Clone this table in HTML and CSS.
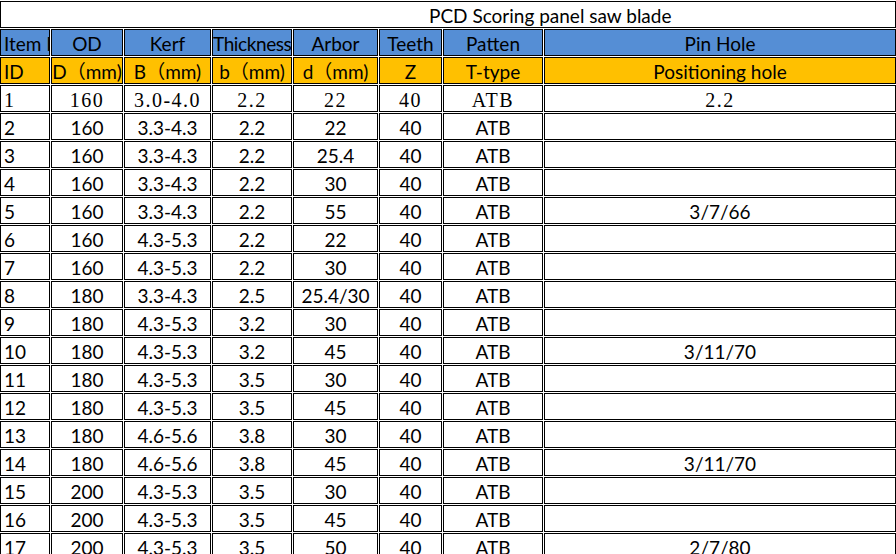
FILE: index.html
```html
<!DOCTYPE html>
<html>
<head>
<meta charset="utf-8">
<title>PCD Scoring panel saw blade</title>
<link rel="stylesheet" href="styles.css">
</head>
<body>
<div class="sheet">
  <div class="cell title">PCD Scoring panel saw blade</div>

  <div class="cell hd1 left">Item No.</div>
  <div class="cell hd1">OD</div>
  <div class="cell hd1">Kerf</div>
  <div class="cell hd1 left tight">Thickness</div>
  <div class="cell hd1">Arbor</div>
  <div class="cell hd1">Teeth</div>
  <div class="cell hd1">Patten</div>
  <div class="cell hd1">Pin Hole</div>

  <div class="cell hd2 left">ID</div>
  <div class="cell hd2">D（mm)</div>
  <div class="cell hd2">B（mm)</div>
  <div class="cell hd2">b（mm)</div>
  <div class="cell hd2">d（mm)</div>
  <div class="cell hd2">Z</div>
  <div class="cell hd2">T-type</div>
  <div class="cell hd2">Positioning hole</div>

  <div class="cell serif left">1</div>
  <div class="cell serif">160</div>
  <div class="cell serif">3.0-4.0</div>
  <div class="cell serif">2.2</div>
  <div class="cell serif">22</div>
  <div class="cell serif">40</div>
  <div class="cell serif">ATB</div>
  <div class="cell serif">2.2</div>

  <div class="cell left">2</div><div class="cell">160</div><div class="cell">3.3-4.3</div><div class="cell">2.2</div><div class="cell">22</div><div class="cell">40</div><div class="cell">ATB</div><div class="cell"></div>
  <div class="cell left">3</div><div class="cell">160</div><div class="cell">3.3-4.3</div><div class="cell">2.2</div><div class="cell">25.4</div><div class="cell">40</div><div class="cell">ATB</div><div class="cell"></div>
  <div class="cell left">4</div><div class="cell">160</div><div class="cell">3.3-4.3</div><div class="cell">2.2</div><div class="cell">30</div><div class="cell">40</div><div class="cell">ATB</div><div class="cell"></div>
  <div class="cell left">5</div><div class="cell">160</div><div class="cell">3.3-4.3</div><div class="cell">2.2</div><div class="cell">55</div><div class="cell">40</div><div class="cell">ATB</div><div class="cell">3/7/66</div>
  <div class="cell left">6</div><div class="cell">160</div><div class="cell">4.3-5.3</div><div class="cell">2.2</div><div class="cell">22</div><div class="cell">40</div><div class="cell">ATB</div><div class="cell"></div>
  <div class="cell left">7</div><div class="cell">160</div><div class="cell">4.3-5.3</div><div class="cell">2.2</div><div class="cell">30</div><div class="cell">40</div><div class="cell">ATB</div><div class="cell"></div>
  <div class="cell left">8</div><div class="cell">180</div><div class="cell">3.3-4.3</div><div class="cell">2.5</div><div class="cell">25.4/30</div><div class="cell">40</div><div class="cell">ATB</div><div class="cell"></div>
  <div class="cell left">9</div><div class="cell">180</div><div class="cell">4.3-5.3</div><div class="cell">3.2</div><div class="cell">30</div><div class="cell">40</div><div class="cell">ATB</div><div class="cell"></div>
  <div class="cell left">10</div><div class="cell">180</div><div class="cell">4.3-5.3</div><div class="cell">3.2</div><div class="cell">45</div><div class="cell">40</div><div class="cell">ATB</div><div class="cell">3/11/70</div>
  <div class="cell left">11</div><div class="cell">180</div><div class="cell">4.3-5.3</div><div class="cell">3.5</div><div class="cell">30</div><div class="cell">40</div><div class="cell">ATB</div><div class="cell"></div>
  <div class="cell left">12</div><div class="cell">180</div><div class="cell">4.3-5.3</div><div class="cell">3.5</div><div class="cell">45</div><div class="cell">40</div><div class="cell">ATB</div><div class="cell"></div>
  <div class="cell left">13</div><div class="cell">180</div><div class="cell">4.6-5.6</div><div class="cell">3.8</div><div class="cell">30</div><div class="cell">40</div><div class="cell">ATB</div><div class="cell"></div>
  <div class="cell left">14</div><div class="cell">180</div><div class="cell">4.6-5.6</div><div class="cell">3.8</div><div class="cell">45</div><div class="cell">40</div><div class="cell">ATB</div><div class="cell">3/11/70</div>
  <div class="cell left">15</div><div class="cell">200</div><div class="cell">4.3-5.3</div><div class="cell">3.5</div><div class="cell">30</div><div class="cell">40</div><div class="cell">ATB</div><div class="cell"></div>
  <div class="cell left">16</div><div class="cell">200</div><div class="cell">4.3-5.3</div><div class="cell">3.5</div><div class="cell">45</div><div class="cell">40</div><div class="cell">ATB</div><div class="cell"></div>
  <div class="cell left">17</div><div class="cell">200</div><div class="cell">4.3-5.3</div><div class="cell">3.5</div><div class="cell">50</div><div class="cell">40</div><div class="cell">ATB</div><div class="cell">2/7/80</div>
</div>
</body>
</html>
```

FILE: styles.css
```css
html, body {
  margin: 0;
  padding: 0;
  background: #ffffff;
}

body {
  font-family: Lato, "Noto Sans CJK SC", sans-serif;
  font-size: 19px;
  color: #000000;
  overflow: hidden;
}

.sheet {
  display: grid;
  grid-template-columns: 50px 72px 87px 80px 85px 63px 100px 352px;
  grid-auto-rows: 27px;
  gap: 1px;
  padding-top: 1px;
  width: 896px;
}

.cell {
  box-sizing: border-box;
  border: 1px solid #000000;
  display: flex;
  align-items: center;
  justify-content: center;
  white-space: nowrap;
  overflow: hidden;
  line-height: 1;
  padding-top: 1px;
}

.title {
  grid-column: 1 / -1;
  justify-content: flex-start;
  padding-left: 428px;
}

.left {
  justify-content: flex-start;
  padding-left: 3px;
}

.tight {
  padding-left: 0;
  letter-spacing: -0.4px;
}

.hd1 {
  background: #558ed5;
}

.hd2 {
  background: #ffc000;
}

.serif {
  font-family: "Liberation Serif", "Noto Sans CJK SC", serif;
  font-size: 20px;
  letter-spacing: 1.5px;
  padding-top: 3px;
}
```
